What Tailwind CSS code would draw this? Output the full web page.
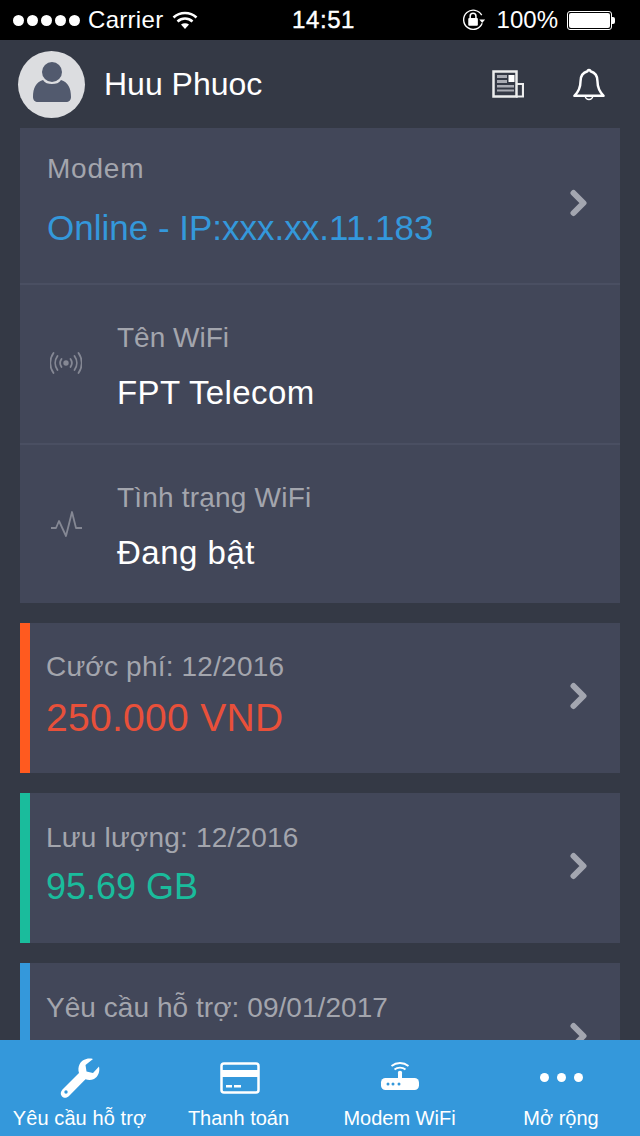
<!DOCTYPE html>
<html><head><meta charset="utf-8"><script src="https://cdn.jsdelivr.net/npm/@tailwindcss/browser@4"></script></head>
<body class="m-0">
<div class="w-[640px] h-[1136px] flex flex-col overflow-hidden bg-[#343945] font-['Liberation_Sans',Arial,sans-serif]">
  <div class="h-10 shrink-0 bg-black text-white flex items-center relative text-[24px] leading-none">
    <div class="flex items-center gap-[3px] ml-[13px]">
      <span class="w-[11px] h-[11px] rounded-full bg-white"></span><span class="w-[11px] h-[11px] rounded-full bg-white"></span><span class="w-[11px] h-[11px] rounded-full bg-white"></span><span class="w-[11px] h-[11px] rounded-full bg-white"></span><span class="w-[11px] h-[11px] rounded-full bg-white"></span>
    </div>
    <span class="ml-[8px] tracking-[0.3px]">Carrier</span>
    <svg class="ml-[9px] -mt-[1px]" width="26" height="20" viewBox="0 0 26 20" fill="none" stroke="#fff" stroke-width="2.6"><path d="M1.500 7.500C8 1.500 18 1.500 24.500 7.500"/><path d="M5.500 11.500C10 7.500 16 7.500 20.500 11.500"/><path d="M13 19l-4-4.500c2.400-1.800 5.600-1.800 8 0z" fill="#fff" stroke="none"/></svg>
    <span class="absolute left-[292px] top-[8px] tracking-[0.6px] [-webkit-text-stroke:0.4px_white]">14:51</span>
    <div class="ml-auto flex items-center mr-[25px]">
      <svg width="25" height="24" viewBox="0 0 26 24" fill="none"><path d="M21 15.500A10 10 0 1 1 20.500 7" stroke="#fff" stroke-width="1.400"/><path d="M18 11.500h6l-3 3.500z" fill="#fff"/><rect x="6.500" y="10" width="10" height="8" rx="1" fill="#fff"/><path d="M8.500 10V8a3 3 0 0 1 6 0v2" stroke="#fff" stroke-width="1.600"/></svg>
      <span class="ml-[10px]">100%</span>
      <div class="ml-[9px] w-[45px] h-[19px] rounded-[3px] border border-white p-[1px]"><div class="w-full h-full bg-white rounded-[2px]"></div></div>
      <div class="w-[3px] h-[7px] bg-white rounded-r-[2px]"></div>
    </div>
  </div>

  <div class="h-[88px] shrink-0 flex items-center pl-[18px] pr-[35px] text-white">
    <div class="w-[67px] h-[67px] rounded-full bg-[#dcdde0] flex items-center justify-center">
      <svg class="mb-[5px]" width="38" height="40" viewBox="0 0 38 40"><path fill="#525a6e" d="M0 35C0 26 3 20 10 18c2 3 5 4 9 4s7-1 9-4c7 2 10 8 10 17 0 3-2 5-5 5H5c-3 0-5-2-5-5z"/><circle cx="19" cy="10" r="10" fill="#525a6e"/></svg>
    </div>
    <span class="ml-[19px] text-[32px] leading-none">Huu Phuoc</span>
    <svg class="ml-auto" width="32" height="28" viewBox="0 0 32 28" fill="none"><path d="M1.500 1.500h23V26.500H1.500z" stroke="#eceded" stroke-width="2.500"/><path d="M24 14h7v12.500H24" stroke="#eceded" stroke-width="2.200"/><path d="M5 5h10v3H5zM5 10h10v3H5zM5 15h17v2.500H5zM5 19.500h17v2H5z" fill="#a9abb3"/><rect x="16.500" y="5" width="6" height="7" fill="#fff"/></svg>
    <svg class="ml-[49px]" width="32" height="36" viewBox="0 0 34 36" fill="none" stroke="#fff" stroke-width="2.600" stroke-linejoin="round"><path d="M17 3c-1 0-1.500 .5-1.500 1.500C10 6 8 10 8 15c0 7-3 12-6.500 15.500h31C29 27 26 22 26 15c0-5-2-9-7.500-10.500C18.500 3.500 18 3 17 3z"/><path d="M13 30.500a4 4 0 0 0 8 0" stroke-width="1.500"/></svg>
  </div>

  <div class="mx-5 shrink-0 flex flex-col gap-5">
    <div class="bg-[#424759]">
      <div class="h-[157px] flex items-center justify-between pl-[27px] pr-[30px] border-b-2 border-[#4a4f62]">
        <div class="-mt-[11px]">
          <div class="text-[28px] leading-none text-[#a3a5ad] tracking-[0.8px]">Modem</div>
          <div class="mt-[27px] text-[35px] leading-none text-[#3498db]">Online - IP:xxx.xx.11.183</div>
        </div>
        <svg width="20" height="28" viewBox="0 0 20 28" fill="none" stroke="#a3a6b0" stroke-width="6" stroke-linecap="round" stroke-linejoin="round" class="-mt-[6px]"><path d="M3.500 4l10 10-10 10"/></svg>
      </div>
      <div class="h-[160px] flex items-center border-b-2 border-[#4a4f62]">
        <svg class="ml-[30px] -mt-[2px]" width="32" height="24" viewBox="0 0 32 24" fill="none" stroke="#858894" stroke-width="1.800" stroke-linecap="round"><circle cx="16" cy="12" r="1.800" fill="#858894"/><path d="M11.500 8a7 7 0 0 0 0 8M20.500 8a7 7 0 0 1 0 8M7.500 5a12 12 0 0 0 0 14M24.500 5a12 12 0 0 1 0 14M3.500 2a17 17 0 0 0 0 20M28.500 2a17 17 0 0 1 0 20"/></svg>
        <div class="ml-[35px] mt-[5px]">
          <div class="text-[28px] leading-none text-[#a3a5ad]">Tên WiFi</div>
          <div class="mt-[24px] text-[33px] leading-none text-white tracking-[0.4px]">FPT Telecom</div>
        </div>
      </div>
      <div class="h-[158px] flex items-center">
        <svg class="ml-[30px]" width="33" height="26" viewBox="0 0 33 26" fill="none" stroke="#858894" stroke-width="1.800" stroke-linejoin="round"><path d="M1 17h5l3-7 7 15 6-24 4 16h6"/></svg>
        <div class="ml-[34px] mt-[5px]">
          <div class="text-[28px] leading-none text-[#a3a5ad] tracking-[0.2px]">Tình trạng WiFi</div>
          <div class="mt-[24px] text-[33px] leading-none text-white tracking-[0.5px]">Đang bật</div>
        </div>
      </div>
    </div>

    <div class="h-[150px] bg-[#424759] border-l-[10px] border-[#ff5a1f] flex items-center justify-between pl-[16px] pr-[30px]">
      <div class="mb-[7px]">
        <div class="text-[28px] leading-none text-[#a3a5ad] tracking-[0.2px]">Cước phí: 12/2016</div>
        <div class="mt-[17px] text-[39px] leading-none text-[#e8503a] tracking-[0.3px]">250.000 VND</div>
      </div>
      <svg class="mb-[4px]" width="20" height="28" viewBox="0 0 20 28" fill="none" stroke="#a3a6b0" stroke-width="6" stroke-linecap="round" stroke-linejoin="round"><path d="M3.500 4l10 10-10 10"/></svg>
    </div>
    <div class="h-[150px] bg-[#424759] border-l-[10px] border-[#1abc9c] flex items-center justify-between pl-[16px] pr-[30px]">
      <div class="mb-[8px]">
        <div class="text-[28px] leading-none text-[#a3a5ad] tracking-[0.2px]">Lưu lượng: 12/2016</div>
        <div class="mt-[17px] text-[36px] leading-none text-[#1abc9c]">95.69 GB</div>
      </div>
      <svg class="mb-[4px]" width="20" height="28" viewBox="0 0 20 28" fill="none" stroke="#a3a6b0" stroke-width="6" stroke-linecap="round" stroke-linejoin="round"><path d="M3.500 4l10 10-10 10"/></svg>
    </div>
    <div class="h-[150px] bg-[#424759] border-l-[10px] border-[#3498db] flex items-center justify-between pl-[16px] pr-[30px]">
      <div class="mb-[8px]">
        <div class="text-[28px] leading-none text-[#a3a5ad] tracking-[0.05px]">Yêu cầu hỗ trợ: 09/01/2017</div>
        <div class="mt-[17px] h-[36px]"></div>
      </div>
      <svg class="mb-[4px]" width="20" height="28" viewBox="0 0 20 28" fill="none" stroke="#a3a6b0" stroke-width="6" stroke-linecap="round" stroke-linejoin="round"><path d="M3.500 4l10 10-10 10"/></svg>
    </div>
  </div>
</div>

<div class="absolute left-0 top-[1040px] w-[640px] h-24 bg-[#3498db] text-white grid grid-cols-4 font-['Liberation_Sans',Arial,sans-serif]">
  <div class="flex flex-col items-center">
    <div class="h-[68px] pt-[7px] flex items-center justify-center">
      <svg width="42" height="42" viewBox="0 0 42 42" fill="#fff"><path d="M40 9.500c1.200 5.500-1 10.500-5 12.500-3 1.500-6 1.300-8.500.3L10 39c-2 2-5 2.500-7 .5s-1.500-5 .5-7L20 16c-1-3-.8-6 .7-9C23 3 28 .5 34 2l-7.500 6 1 6.500 6.500 1.500z"/><circle cx="7" cy="35" r="1.700" fill="#3498db"/></svg>
    </div>
    <span class="text-[20px] leading-none -ml-[1px] tracking-[0.1px]">Yêu cầu hỗ trợ</span>
  </div>
  <div class="flex flex-col items-center">
    <div class="h-[68px] pt-[7px] flex items-center justify-center">
      <svg width="40" height="32" viewBox="0 0 40 32" fill="none"><rect x="1.500" y="1.500" width="37" height="29" rx="2.500" stroke="#fff" stroke-width="2.500"/><rect x="2" y="8" width="36" height="7" fill="#fff"/><path d="M6 23h6v2.500H6zM14 23h7v2.500h-7z" fill="#fff"/></svg>
    </div>
    <span class="text-[20px] leading-none -ml-[3px]">Thanh toán</span>
  </div>
  <div class="flex flex-col items-center">
    <div class="h-[68px] pt-[4px] flex items-center justify-center">
      <svg width="40" height="30" viewBox="0 0 40 30" fill="none"><path d="M18 13V20h4V13z" fill="#fff"/><circle cx="20" cy="12" r="2.200" fill="#fff"/><path d="M14.500 8.500c3-2.500 8-2.500 11 0M11.500 5c5-4 12-4 17 0" stroke="#fff" stroke-width="1.800"/><rect x="1" y="17" width="38" height="12" rx="4.500" fill="#fff"/><circle cx="8" cy="23" r="1.500" fill="#3498db"/><circle cx="13" cy="23" r="1.500" fill="#3498db"/><circle cx="19" cy="23" r="1.500" fill="#3498db"/></svg>
    </div>
    <span class="text-[20px] leading-none -ml-[1px]">Modem WiFi</span>
  </div>
  <div class="flex flex-col items-center">
    <div class="h-[68px] pt-[6px] flex items-center justify-center gap-[8px] ml-[2px]">
      <span class="w-[9px] h-[9px] rounded-full bg-white"></span><span class="w-[9px] h-[9px] rounded-full bg-white"></span><span class="w-[9px] h-[9px] rounded-full bg-white"></span>
    </div>
    <span class="text-[20px] leading-none ml-[2px]">Mở rộng</span>
  </div>
</div>
</body></html>
